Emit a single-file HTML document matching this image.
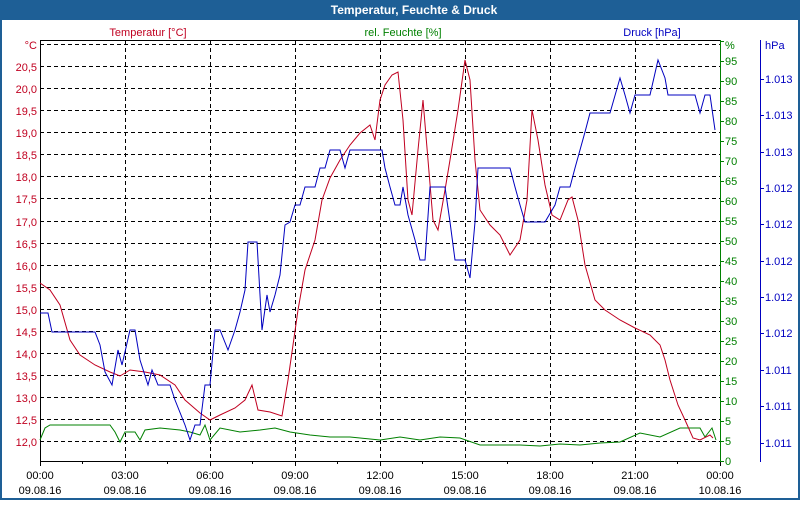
<!DOCTYPE html><html><head><style>
body{margin:0;width:800px;height:500px;background:#fff;font-family:"Liberation Sans",sans-serif;overflow:hidden}
</style></head><body>
<svg width="800" height="500" xmlns="http://www.w3.org/2000/svg" font-family="Liberation Sans, sans-serif" font-size="11">
<rect x="0" y="0" width="800" height="500" fill="#fff"/>
<rect x="0" y="0" width="800" height="20" fill="#1e5f96"/>
<rect x="0" y="20" width="2" height="480" fill="#1e5f96"/><rect x="798" y="20" width="2" height="480" fill="#1e5f96"/><rect x="0" y="498" width="800" height="2" fill="#1e5f96"/>
<text x="414" y="14" text-anchor="middle" fill="#fff" font-weight="bold" font-size="12">Temperatur, Feuchte &amp; Druck</text>
<text x="148" y="36" text-anchor="middle" fill="#c00020">Temperatur [°C]</text>
<text x="403" y="36" text-anchor="middle" fill="#008000">rel. Feuchte [%]</text>
<text x="652" y="36" text-anchor="middle" fill="#0000c0">Druck [hPa]</text>
<g stroke="#000" stroke-dasharray="4,3" stroke-width="1">
<path d="M40 44.5H720M40 66.5H720M40 88.5H720M40 110.5H720M40 132.5H720M40 154.5H720M40 176.5H720M40 198.5H720M40 221.5H720M40 243.5H720M40 265.5H720M40 287.5H720M40 309.5H720M40 331.5H720M40 353.5H720M40 375.5H720M40 397.5H720M40 419.5H720M40 441.5H720"/>
<path d="M125.5 41V461M210.5 41V461M295.5 41V461M380.5 41V461M465.5 41V461M550.5 41V461M635.5 41V461"/>
</g>
<path d="M40.5 40V462M40 40.5H720M40 461.5H720" stroke="#000" fill="none"/>
<path d="M82.5 461v3M167.5 461v3M252.5 461v3M337.5 461v3M422.5 461v3M507.5 461v3M592.5 461v3M677.5 461v3M40.5 461v5M125.5 461v5M210.5 461v5M295.5 461v5M380.5 461v5M465.5 461v5M550.5 461v5M635.5 461v5M720.5 461v5" stroke="#000"/>
<path d="M720.5 40V462" stroke="#008000"/>
<path d="M720 41.5h4M720 61.5h4M720 81.5h4M720 101.5h4M720 121.5h4M720 141.5h4M720 161.5h4M720 181.5h4M720 201.5h4M720 221.5h4M720 241.5h4M720 261.5h4M720 281.5h4M720 301.5h4M720 321.5h4M720 341.5h4M720 361.5h4M720 381.5h4M720 401.5h4M720 421.5h4M720 441.5h4M720 461.5h4" stroke="#008000"/>
<path d="M760.5 40V462" stroke="#0000c0"/>
<path d="M760 79.5h4M760 115.5h4M760 152.5h4M760 188.5h4M760 224.5h4M760 261.5h4M760 297.5h4M760 333.5h4M760 370.5h4M760 406.5h4M760 443.5h4" stroke="#0000c0"/>
<g fill="#c00020" text-anchor="end">
<text x="37" y="49">°C</text><text x="37" y="71">20,5</text><text x="37" y="93">20,0</text><text x="37" y="115">19,5</text><text x="37" y="137">19,0</text><text x="37" y="159">18,5</text><text x="37" y="181">18,0</text><text x="37" y="203">17,5</text><text x="37" y="226">17,0</text><text x="37" y="248">16,5</text><text x="37" y="270">16,0</text><text x="37" y="292">15,5</text><text x="37" y="314">15,0</text><text x="37" y="336">14,5</text><text x="37" y="358">14,0</text><text x="37" y="380">13,5</text><text x="37" y="402">13,0</text><text x="37" y="424">12,5</text><text x="37" y="446">12,0</text>
</g>
<g fill="#008000">
<text x="725" y="49">%</text><text x="725" y="65">95</text><text x="725" y="85">90</text><text x="725" y="105">85</text><text x="725" y="125">80</text><text x="725" y="145">75</text><text x="725" y="165">70</text><text x="725" y="185">65</text><text x="725" y="205">60</text><text x="725" y="225">55</text><text x="725" y="245">50</text><text x="725" y="265">45</text><text x="725" y="285">40</text><text x="725" y="305">35</text><text x="725" y="325">30</text><text x="725" y="345">25</text><text x="725" y="365">20</text><text x="725" y="385">15</text><text x="725" y="405">10</text><text x="725" y="425">5</text><text x="725" y="445">5</text><text x="725" y="465">0</text>
</g>
<g fill="#0000c0">
<text x="765" y="49">hPa</text><text x="765" y="83">1.013</text><text x="765" y="119">1.013</text><text x="765" y="156">1.013</text><text x="765" y="192">1.012</text><text x="765" y="228">1.012</text><text x="765" y="265">1.012</text><text x="765" y="301">1.012</text><text x="765" y="337">1.012</text><text x="765" y="374">1.011</text><text x="765" y="410">1.011</text><text x="765" y="447">1.011</text>
</g>
<g fill="#000" text-anchor="middle">
<text x="40" y="479">00:00</text><text x="40" y="494">09.08.16</text>
<text x="125" y="479">03:00</text><text x="125" y="494">09.08.16</text>
<text x="210" y="479">06:00</text><text x="210" y="494">09.08.16</text>
<text x="295" y="479">09:00</text><text x="295" y="494">09.08.16</text>
<text x="380" y="479">12:00</text><text x="380" y="494">09.08.16</text>
<text x="465" y="479">15:00</text><text x="465" y="494">09.08.16</text>
<text x="550" y="479">18:00</text><text x="550" y="494">09.08.16</text>
<text x="635" y="479">21:00</text><text x="635" y="494">09.08.16</text>
<text x="720" y="479">00:00</text><text x="720" y="494">10.08.16</text>
</g>
<polyline fill="none" stroke="#008000" points="40,440 45,428 50,425 110,425 115,432 120,442 125,432 135,432 140,440 145,430 160,428 180,430 190,432 200,435 205,425 210,440 220,428 240,432 260,430 275,428 290,432 310,435 330,437 350,437 380,440 400,437 420,440 440,437 460,438 480,445 500,445 520,445 540,446 560,444 580,445 600,443 620,442 640,433 660,437 680,428 700,428 705,437 712,428 716,440"/>
<polyline fill="none" stroke="#c00020" points="40,283 50,290 60,305 70,340 80,355 95,365 110,372 120,376 130,370 145,372 160,375 175,385 185,400 200,413 210,420 220,415 235,408 245,400 252,385 258,410 270,412 282,416 288,380 293,345 298,310 305,270 315,240 322,200 330,178 340,160 350,145 360,133 370,125 375,140 380,100 385,85 392,75 398,72 403,120 408,200 412,215 418,150 423,100 428,160 433,220 438,230 445,190 450,160 458,110 465,60 470,80 475,160 480,210 490,225 500,235 510,255 520,240 527,200 532,110 538,140 545,185 552,215 560,220 568,200 572,197 578,220 585,265 595,300 605,310 620,320 635,328 650,335 660,345 665,360 670,380 678,405 685,420 693,438 700,440 710,435 713,438"/>
<polyline fill="none" stroke="#0000c0" points="40,313 48,313 52,332 95,332 100,345 105,372 112,385 118,350 122,365 130,330 135,330 140,360 148,385 152,370 158,385 170,385 175,400 185,425 190,440 195,425 200,425 205,385 210,385 215,330 220,330 228,350 235,330 240,312 245,290 248,242 257,242 262,330 267,295 270,312 275,295 280,275 285,225 290,222 295,205 300,205 305,187 315,187 320,168 325,168 330,150 340,150 345,168 350,150 382,150 385,168 390,187 395,205 400,205 403,187 408,215 415,240 420,260 425,260 430,187 445,187 450,222 455,260 465,260 470,278 475,222 478,168 510,168 515,187 520,205 525,222 545,222 555,205 560,187 570,187 575,168 585,132 590,113 610,113 620,78 625,95 630,113 635,95 650,95 658,60 665,78 668,95 695,95 700,113 705,95 710,95 715,130"/>
</svg>
</body></html>
